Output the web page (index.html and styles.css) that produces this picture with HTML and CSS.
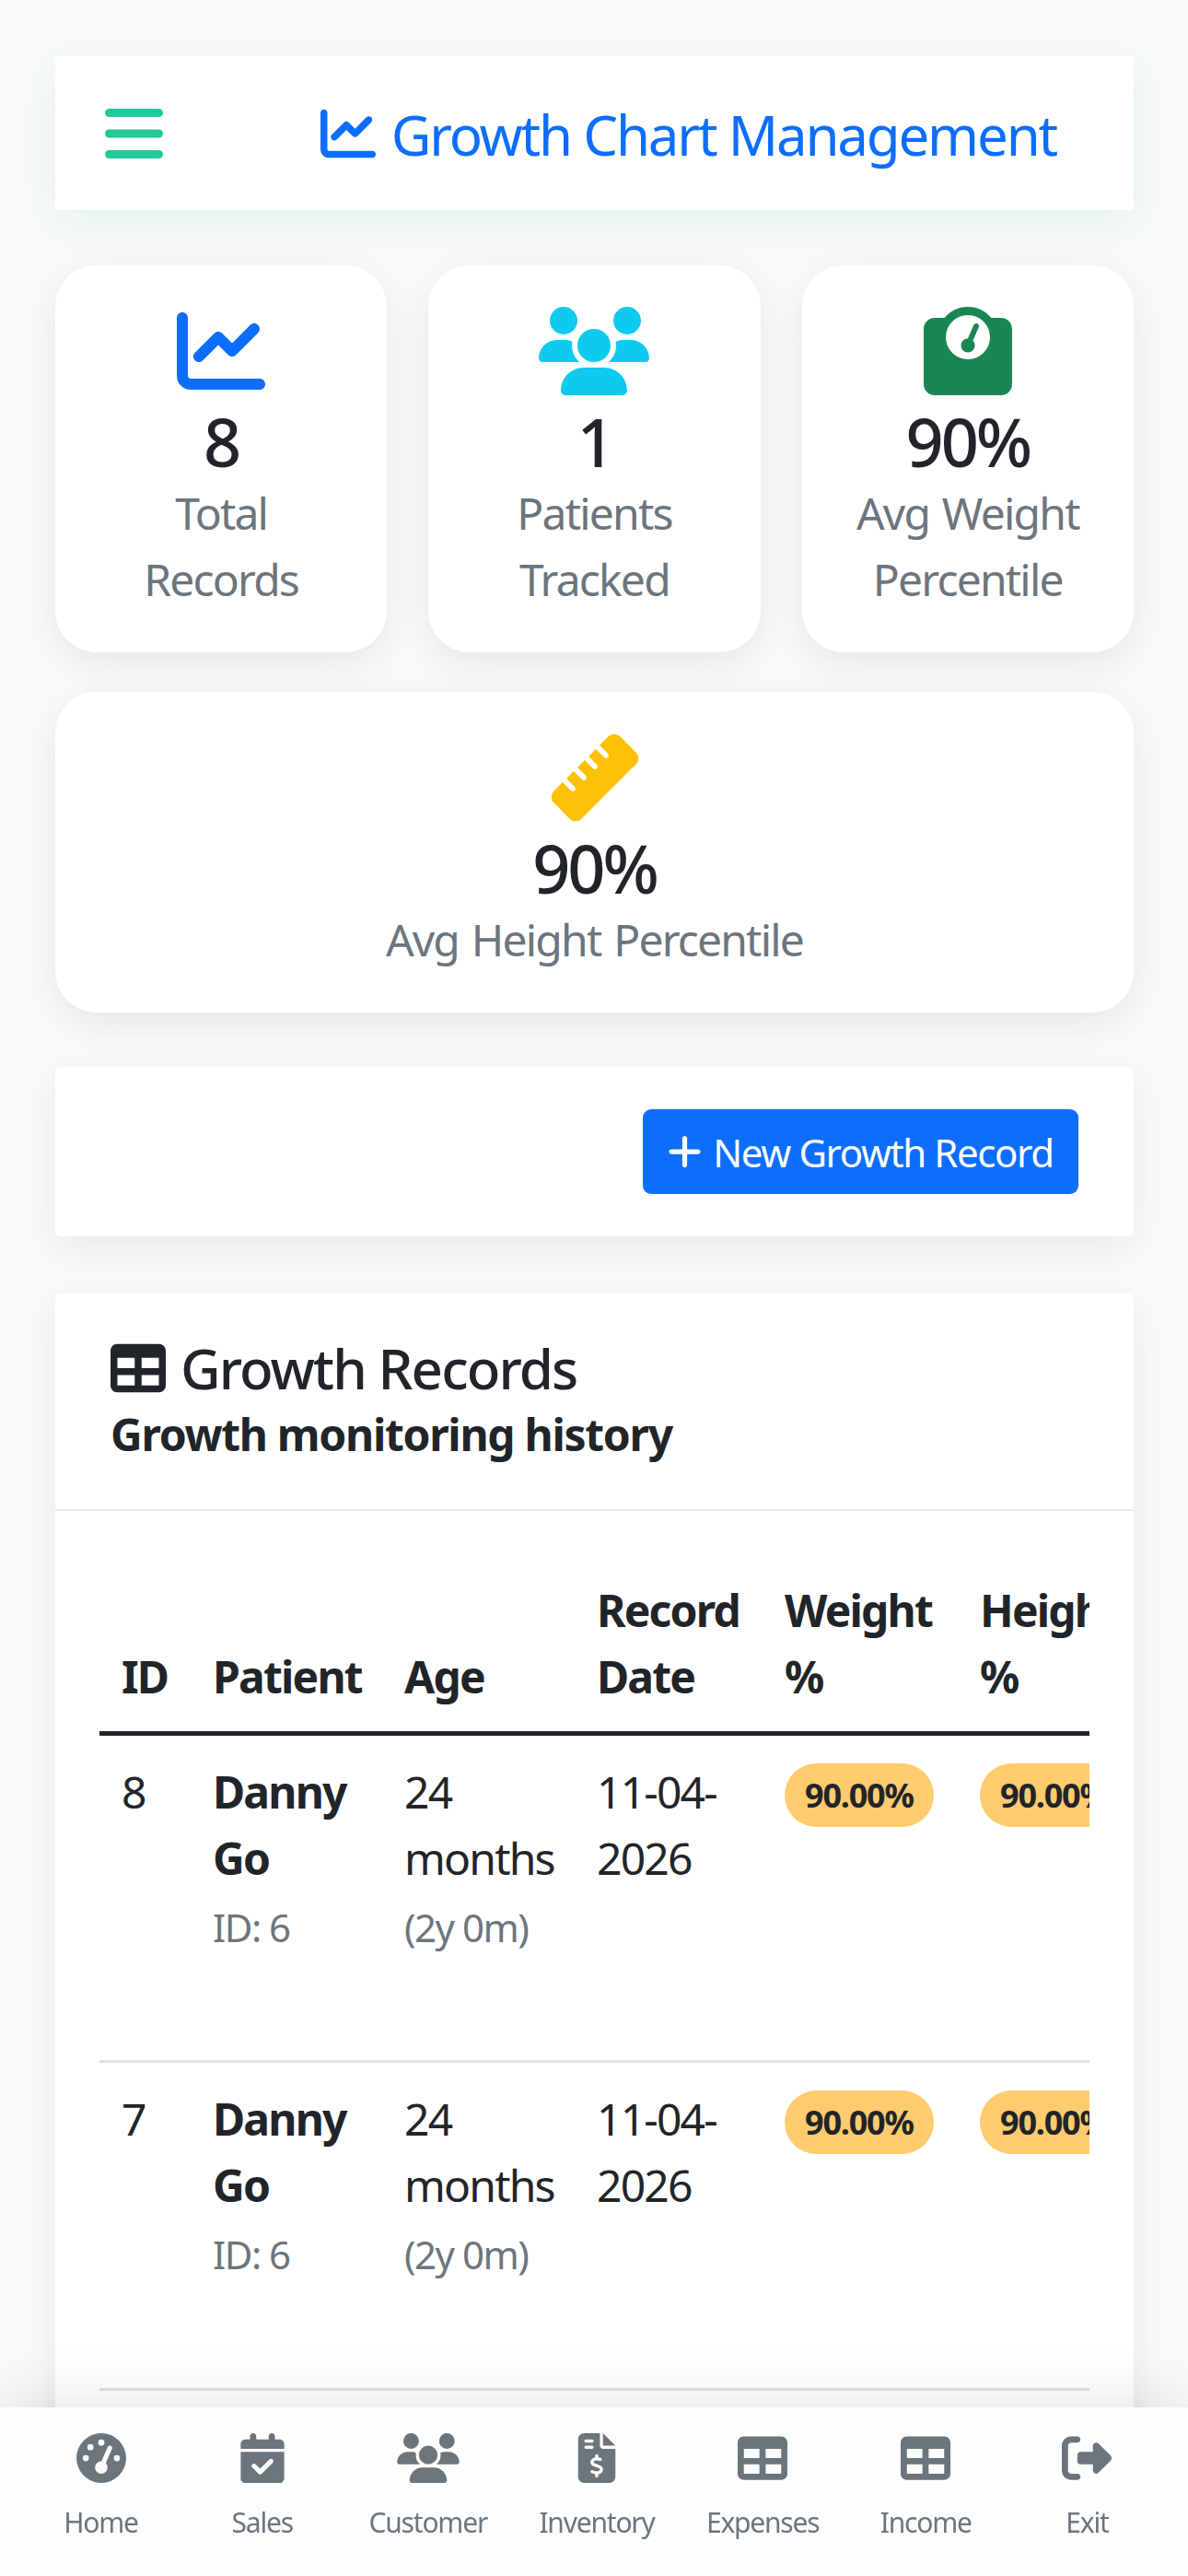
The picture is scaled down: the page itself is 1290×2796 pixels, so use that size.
FILE: index.html
```html
<!DOCTYPE html>
<html lang="en">
<head>
  <meta charset="UTF-8">
  <title>Growth Chart Management</title>
  <link rel="stylesheet" href="styles.css">
</head>
<body>
  <!-- shared icons -->
  <svg class="sprite" xmlns="http://www.w3.org/2000/svg">
    <symbol id="i-chart" viewBox="0 0 512 512"><path d="M64 64c0-17.700-14.300-32-32-32S0 46.300 0 64V400c0 44.200 35.800 80 80 80H480c17.700 0 32-14.300 32-32s-14.300-32-32-32H80c-8.800 0-16-7.200-16-16V64zm406.600 86.600c12.500-12.500 12.500-32.800 0-45.300s-32.800-12.500-45.300 0L320 210.700l-57.400-57.400c-12.500-12.500-32.800-12.500-45.300 0l-112 112c-12.500 12.500-12.500 32.800 0 45.300s32.800 12.500 45.300 0L240 221.300l57.400 57.400c12.500 12.500 32.800 12.500 45.300 0l128-128z"/></symbol>
    <symbol id="i-users" viewBox="0 0 640 512"><path d="M144 0a80 80 0 1 1 0 160A80 80 0 1 1 144 0zM512 0a80 80 0 1 1 0 160A80 80 0 1 1 512 0zM0 298.700C0 239.800 47.800 192 106.700 192h42.700c15.900 0 31 3.500 44.600 9.700c-1.300 7.200-1.900 14.700-1.900 22.300c0 38.200 16.800 72.500 43.300 96c-.2 0-.4 0-.7 0H21.300C9.600 320 0 310.400 0 298.700zM405.300 320c-.2 0-.4 0-.7 0c26.600-23.500 43.300-57.800 43.300-96c0-7.600-.7-15-1.900-22.300c13.600-6.300 28.700-9.700 44.600-9.700h42.700C592.200 192 640 239.800 640 298.700c0 11.800-9.600 21.300-21.300 21.300H405.300zM224 224a96 96 0 1 1 192 0 96 96 0 1 1 -192 0zM128 485.300C128 411.700 187.700 352 261.300 352H378.700C452.300 352 512 411.700 512 485.300c0 14.700-11.900 26.700-26.700 26.700H154.700c-14.700 0-26.700-11.900-26.700-26.700z"/></symbol>
    <symbol id="i-scale" viewBox="0 0 512 512"><path d="M128 176a128 128 0 1 1 256 0 128 128 0 1 1 -256 0zM391.800 64C359.500 24.900 310.700 0 256 0S152.500 24.900 120.200 64H64C28.700 64 0 92.700 0 128V448c0 35.300 28.700 64 64 64H448c35.300 0 64-28.700 64-64V128c0-35.300-28.700-64-64-64H391.800zM296 224c0-10.600-4.100-20.200-10.900-27.400l33.600-78.300c3.500-8.100-.3-17.500-8.400-21s-17.500 .3-21 8.400L255.700 184c-22 .1-39.700 18-39.700 40c0 22.100 17.900 40 40 40s40-17.900 40-40z"/></symbol>
    <symbol id="i-ruler" viewBox="0 0 512 512"><path d="M177.900 494.100c-18.700 18.700-49.100 18.700-67.900 0L17.900 401.900c-18.700-18.700-18.700-49.100 0-67.900l50.700-50.700 48 48c6.200 6.200 16.400 6.200 22.600 0s6.200-16.400 0-22.600l-48-48 41.400-41.400 48 48c6.200 6.200 16.400 6.200 22.600 0s6.200-16.400 0-22.600l-48-48 41.400-41.400 48 48c6.200 6.200 16.400 6.200 22.600 0s6.200-16.400 0-22.600l-48-48 41.400-41.400 48 48c6.200 6.200 16.400 6.200 22.600 0s6.200-16.400 0-22.600l-48-48 50.700-50.700c18.700-18.700 49.100-18.700 67.900 0l92.100 92.100c18.700 18.700 18.700 49.100 0 67.900L177.900 494.100z"/></symbol>
    <symbol id="i-table" viewBox="0 0 512 512"><path d="M64 256V160H224v96H64zm0 64H224v96H64V320zm224 96V320H448v96H288zM448 256H288V160H448v96zM64 32C28.700 32 0 60.700 0 96V416c0 35.300 28.700 64 64 64H448c35.300 0 64-28.700 64-64V96c0-35.300-28.700-64-64-64H64z"/></symbol>
  </svg>

  <div class="app">
    <header class="topbar">
      <svg class="menu-icon" viewBox="0 0 448 512"><path d="M0 96C0 78.300 14.300 64 32 64H416c17.700 0 32 14.300 32 32s-14.300 32-32 32H32C14.300 128 0 113.700 0 96zM0 256c0-17.700 14.300-32 32-32H416c17.700 0 32 14.300 32 32s-14.300 32-32 32H32c-17.700 0-32-14.300-32-32zM448 416c0 17.700-14.300 32-32 32H32c-17.700 0-32-14.300-32-32s14.300-32 32-32H416c17.700 0 32 14.300 32 32z"/></svg>
      <h1 class="page-title">
        <svg class="title-icon"><use href="#i-chart"/></svg>
        <span class="title-text">Growth Chart Management</span>
      </h1>
    </header>

    <section class="stats">
      <div class="stat-card">
        <svg class="stat-icon blue"><use href="#i-chart"/></svg>
        <div class="stat-value">8</div>
        <div class="stat-label">Total Records</div>
      </div>
      <div class="stat-card">
        <svg class="stat-icon stat-icon-wide cyan"><use href="#i-users"/></svg>
        <div class="stat-value">1</div>
        <div class="stat-label">Patients Tracked</div>
      </div>
      <div class="stat-card">
        <svg class="stat-icon green"><use href="#i-scale"/></svg>
        <div class="stat-value">90%</div>
        <div class="stat-label">Avg Weight Percentile</div>
      </div>
      <div class="stat-card stat-card-full">
        <svg class="stat-icon yellow"><use href="#i-ruler"/></svg>
        <div class="stat-value">90%</div>
        <div class="stat-label">Avg Height Percentile</div>
      </div>
    </section>

    <section class="actions">
      <button class="btn-new">
        <svg class="btn-icon" viewBox="0 0 448 512"><path d="M256 80c0-17.700-14.300-32-32-32s-32 14.300-32 32V224H48c-17.700 0-32 14.300-32 32s14.300 32 32 32H192V432c0 17.700 14.300 32 32 32s32-14.300 32-32V288H400c17.700 0 32-14.300 32-32s-14.300-32-32-32H256V80z"/></svg>
        New Growth Record
      </button>
    </section>

    <section class="records">
      <div class="records-head">
        <h2 class="records-title"><svg class="records-icon"><use href="#i-table"/></svg>Growth Records</h2>
        <div class="records-sub">Growth monitoring history</div>
      </div>
      <div class="records-body">
        <div class="table-scroll">
          <table class="growth-table">
            <colgroup>
              <col class="col-id"><col class="col-patient"><col class="col-age"><col class="col-date"><col class="col-weight"><col class="col-height">
            </colgroup>
            <thead>
              <tr>
                <th>ID</th>
                <th>Patient</th>
                <th>Age</th>
                <th>Record Date</th>
                <th>Weight %</th>
                <th>Height %</th>
              </tr>
            </thead>
            <tbody>
              <tr>
                <td>8</td>
                <td><strong>Danny Go</strong><small class="note">ID: 6</small></td>
                <td>24 months<small class="note">(2y 0m)</small></td>
                <td>11-04-2026</td>
                <td><span class="pct">90.00%</span></td>
                <td><span class="pct">90.00%</span></td>
              </tr>
              <tr>
                <td>7</td>
                <td><strong>Danny Go</strong><small class="note">ID: 6</small></td>
                <td>24 months<small class="note">(2y 0m)</small></td>
                <td>11-04-2026</td>
                <td><span class="pct">90.00%</span></td>
                <td><span class="pct">90.00%</span></td>
              </tr>
            </tbody>
          </table>
        </div>
      </div>
    </section>
  </div>

  <nav class="bottom-nav">
    <a class="nav-item">
      <svg class="nav-icon" viewBox="0 0 512 512"><path d="M0 256a256 256 0 1 1 512 0A256 256 0 1 1 0 256zM288 96a32 32 0 1 0 -64 0 32 32 0 1 0 64 0zM256 416c35.300 0 64-28.700 64-64c0-17.400-6.900-33.100-18.100-44.600L366 161.700c5.300-12.100-.2-26.300-12.300-31.600s-26.300 .2-31.600 12.300L257.900 288c-.6 0-1.300 0-1.900 0c-35.300 0-64 28.700-64 64s28.700 64 64 64zM176 144a32 32 0 1 0 -64 0 32 32 0 1 0 64 0zM96 288a32 32 0 1 0 0-64 32 32 0 1 0 0 64zm352-32a32 32 0 1 0 -64 0 32 32 0 1 0 64 0z"/></svg>
      Home
    </a>
    <a class="nav-item">
      <svg class="nav-icon" viewBox="0 0 448 512"><path d="M128 0c17.700 0 32 14.300 32 32V64H288V32c0-17.700 14.300-32 32-32s32 14.300 32 32V64h48c26.500 0 48 21.500 48 48v48H0V112C0 85.500 21.500 64 48 64H96V32c0-17.700 14.300-32 32-32zM0 192H448V464c0 26.500-21.500 48-48 48H48c-26.500 0-48-21.500-48-48V192zM329 305c9.400-9.400 9.400-24.600 0-33.900s-24.600-9.400-33.900 0l-95 95-47-47c-9.400-9.400-24.600-9.400-33.900 0s-9.400 24.600 0 33.900l64 64c9.400 9.400 24.600 9.400 33.900 0L329 305z"/></svg>
      Sales
    </a>
    <a class="nav-item">
      <svg class="nav-icon"><use href="#i-users"/></svg>
      Customer
    </a>
    <a class="nav-item">
      <svg class="nav-icon" viewBox="0 0 384 512"><path d="M64 0C28.700 0 0 28.700 0 64V448c0 35.300 28.700 64 64 64H320c35.300 0 64-28.700 64-64V160H256c-17.700 0-32-14.300-32-32V0H64zM256 0V128H384L256 0zM64 80c0-8.800 7.200-16 16-16h64c8.800 0 16 7.200 16 16s-7.200 16-16 16H80c-8.800 0-16-7.200-16-16zm0 64c0-8.800 7.200-16 16-16h64c8.800 0 16 7.200 16 16s-7.200 16-16 16H80c-8.800 0-16-7.200-16-16zm128 72c8.800 0 16 7.200 16 16v17.300c8.500 1.200 16.700 3.100 24.100 5.100c8.500 2.300 13.600 11 11.300 19.600s-11 13.600-19.600 11.300c-11.100-3-22-5.200-32.100-5.300c-8.400-.1-17.400 1.800-23.600 5.500c-5.700 3.400-8.100 7.300-8.100 12.800c0 3.700 1.300 6.500 7.300 10.100c6.900 4.100 16.600 7.100 29.200 10.900l.5 .1 0 0 0 0c11.300 3.400 25.300 7.600 36.300 14.600c12.100 7.600 22.400 19.700 22.700 38.200c.3 19.300-9.600 33.300-22.900 41.600c-7.700 4.800-16.400 7.600-25.100 9.100V440c0 8.800-7.200 16-16 16s-16-7.200-16-16V422.200c-11.200-2.100-21.700-5.700-30.900-8.900l0 0c-2.100-.7-4.200-1.400-6.200-2.100c-8.400-2.800-12.900-11.900-10.100-20.200s11.900-12.900 20.200-10.100c2.500 .8 4.800 1.600 7.100 2.400l0 0 0 0 0 0c13.600 4.600 24.600 8.400 36.300 8.700c9.100 .3 17.900-1.700 23.700-5.300c5.100-3.200 7.900-7.300 7.800-14c-.1-4.600-1.800-7.800-7.700-11.600c-6.800-4.300-16.500-7.400-29-11.200l-1.600-.5 0 0c-11-3.300-24.300-7.300-34.800-13.700c-12-7.200-22.600-18.900-22.700-37.300c-.1-19.400 10.800-32.800 23.800-40.500c7.500-4.400 15.800-7.200 24.100-8.700V232c0-8.800 7.200-16 16-16z"/></svg>
      Inventory
    </a>
    <a class="nav-item">
      <svg class="nav-icon"><use href="#i-table"/></svg>
      Expenses
    </a>
    <a class="nav-item">
      <svg class="nav-icon"><use href="#i-table"/></svg>
      Income
    </a>
    <a class="nav-item">
      <svg class="nav-icon" viewBox="0 0 512 512"><path d="M377.900 105.900L500.700 228.700c7.200 7.200 11.300 17.100 11.300 27.300s-4.100 20.100-11.300 27.300L377.900 406.100c-6.400 6.400-15 9.900-24 9.900c-18.700 0-33.900-15.200-33.900-33.900l0-62.100-128 0c-17.700 0-32-14.300-32-32l0-64c0-17.700 14.300-32 32-32l128 0 0-62.100c0-18.700 15.200-33.900 33.900-33.900c9 0 17.600 3.600 24 9.900zM160 96L96 96c-17.700 0-32 14.300-32 32l0 256c0 17.700 14.300 32 32 32l64 0c17.700 0 32 14.300 32 32s-14.300 32-32 32l-64 0c-53 0-96-43-96-96L0 128C0 75 43 32 96 32l64 0c17.700 0 32 14.300 32 32s-14.300 32-32 32z"/></svg>
      Exit
    </a>
  </nav>
</body>
</html>
```

FILE: styles.css
```css
* {
  box-sizing: border-box;
}
html, body {
  margin: 0;
  height: 100%;
}
body {
  font-family: "Noto Sans", "Open Sans", sans-serif;
  font-size: 48px;
  line-height: 72px;
  letter-spacing: -1.8px;
  color: #212529;
  background-color: #f8f9fa;
  overflow: hidden;
}
.sprite {
  display: none;
}
.app {
  height: 100vh;
  overflow: hidden;
  padding: 61px 59px 0 60px;
}

/* top bar */
.topbar {
  display: flex;
  align-items: center;
  justify-content: space-between;
  height: 167px;
  padding: 0 84px 0 54px;
  margin-bottom: 60px;
  background-color: #fff;
  box-shadow: 0 12px 45px rgba(32, 201, 151, 0.1);
}
.menu-icon {
  width: 63px;
  height: 72px;
  fill: #20c997;
}
.page-title {
  display: flex;
  align-items: center;
  gap: 17px;
  margin: 0;
  font-size: 60px;
  font-weight: 400;
  line-height: 72px;
  letter-spacing: -2.2px;
  color: #0d6efd;
}
.title-icon {
  width: 60px;
  height: 60px;
  fill: #0d6efd;
}
.title-text {
  padding-top: 3px;
}

/* stat cards */
.stats {
  display: grid;
  grid-template-columns: repeat(3, 1fr);
  column-gap: 45px;
  row-gap: 43px;
  margin-bottom: 59px;
}
.stat-card {
  padding: 45px 45px 43px;
  text-align: center;
  background-color: #fff;
  border-radius: 45px;
  box-shadow: 0 12px 40px rgba(0, 0, 0, 0.08);
}
.stat-card-full {
  grid-column: span 3;
}
.stat-icon {
  display: block;
  width: 96px;
  height: 96px;
  margin: 0 auto;
}
.stat-icon-wide {
  width: 120px;
}
.blue { fill: #0d6efd; }
.cyan { fill: #0dcaf0; }
.green { fill: #198754; }
.yellow { fill: #ffc107; }
.stat-value {
  padding-top: 8px;
  font-size: 72px;
  font-weight: 500;
  line-height: 84px;
  letter-spacing: -3px;
}
.stat-label {
  color: #6c757d;
  word-spacing: 3px;
}

/* new record button */
.actions {
  display: flex;
  justify-content: flex-end;
  padding: 46px 60px;
  margin-bottom: 62px;
  background-color: #fff;
  border-radius: 6px;
  box-shadow: 0 12px 40px rgba(0, 0, 0, 0.07);
}
.btn-new {
  display: flex;
  align-items: center;
  justify-content: center;
  gap: 12px;
  width: 473px;
  height: 92px;
  padding: 0;
  font-family: inherit;
  font-size: 42px;
  letter-spacing: -1.4px;
  color: #fff;
  background-color: #0d6efd;
  border: none;
  border-radius: 9px;
}
.btn-icon {
  width: 37px;
  height: 42px;
  fill: #fff;
}

/* records table */
.records {
  height: 1500px;
  background-color: #fff;
  border-radius: 6px;
  box-shadow: 0 12px 40px rgba(0, 0, 0, 0.07);
}
.records-head {
  padding: 45px 60px;
  border-bottom: 2px solid #e9ecef;
}
.records-title {
  display: flex;
  align-items: center;
  gap: 16px;
  margin: 0;
  font-size: 60px;
  font-weight: 500;
  line-height: 72px;
  letter-spacing: -1.9px;
}
.records-icon {
  width: 60px;
  height: 60px;
  fill: #212529;
}
.records-sub {
  font-weight: 700;
  letter-spacing: -1.3px;
}
.records-body {
  padding: 48px 48px 0;
}
.table-scroll {
  overflow: hidden;
}
.growth-table {
  width: 1144px;
  table-layout: fixed;
  border-collapse: collapse;
}
.col-id { width: 99px; }
.col-patient { width: 208px; }
.col-age { width: 209px; }
.col-date { width: 204px; }
.col-weight { width: 212px; }
.col-height { width: 212px; }
.growth-table th {
  padding: 24px 12px 23px 24px;
  font-weight: 700;
  text-align: left;
  vertical-align: bottom;
  border-bottom: 5px solid #212529;
}
.growth-table td {
  height: 356px;
  padding: 25px 8px 24px 24px;
  vertical-align: top;
  border-bottom: 3px solid #dee2e6;
}
.note {
  display: block;
  font-size: 42px;
  line-height: 78px;
  color: #6c757d;
  letter-spacing: -1.5px;
}
.pct {
  display: inline-block;
  height: 69px;
  padding: 0 22px;
  font-size: 36px;
  font-weight: 700;
  line-height: 69px;
  letter-spacing: -1.2px;
  white-space: nowrap;
  vertical-align: top;
  margin-top: 5px;
  background-color: #fecb6e;
  border-radius: 35px;
}

/* bottom navigation */
.bottom-nav {
  position: fixed;
  left: 0;
  right: 0;
  bottom: 0;
  display: flex;
  justify-content: space-between;
  height: 183px;
  padding: 28px 50px 0;
  background-color: rgba(252, 253, 253, 0.97);
  box-shadow: 0 -9px 60px rgba(0, 0, 0, 0.1);
}
.nav-item {
  display: flex;
  flex-direction: column;
  align-items: center;
  min-width: 119px;
  font-size: 30px;
  line-height: 45px;
  letter-spacing: -1.2px;
  color: #6c757d;
}
.nav-icon {
  width: 68px;
  height: 54px;
  margin-bottom: 20px;
  fill: #6c757d;
}
```
